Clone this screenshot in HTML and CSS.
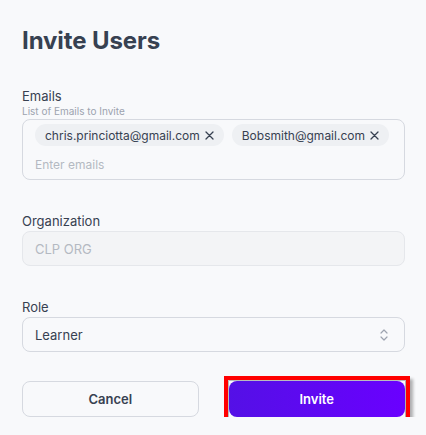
FILE: index.html
```html
<!DOCTYPE html>
<html>
<head>
<meta charset="utf-8">
<link rel="stylesheet" href="styles.css">
</head>
<body>
<div class="page">
  <h1 class="title">Invite Users</h1>

  <div class="field field-emails">
    <div class="label">Emails</div>
    <div class="hint">List of Emails to Invite</div>
    <div class="box tags">
      <div class="chips">
        <span class="chip">chris.princiotta@gmail.com <svg class="x" width="9" height="9" viewBox="0 0 9 9"><path d="M1 1 L8 8 M8 1 L1 8" stroke="#374151" stroke-width="1.3" stroke-linecap="round"/></svg></span>
        <span class="chip">Bobsmith@gmail.com <svg class="x" width="9" height="9" viewBox="0 0 9 9"><path d="M1 1 L8 8 M8 1 L1 8" stroke="#374151" stroke-width="1.3" stroke-linecap="round"/></svg></span>
      </div>
      <div class="placeholder">Enter emails</div>
    </div>
  </div>

  <div class="field field-org">
    <div class="label">Organization</div>
    <div class="box input disabled">CLP ORG</div>
  </div>

  <div class="field field-role">
    <div class="label">Role</div>
    <div class="box input select">
      <span>Learner</span>
      <svg class="updown" width="10" height="14" viewBox="0 0 10 14"><path d="M2 5 L5 2 L8 5" fill="none" stroke="#9ca3af" stroke-width="1.2" stroke-linecap="round" stroke-linejoin="round"/><path d="M2 9 L5 12 L8 9" fill="none" stroke="#9ca3af" stroke-width="1.2" stroke-linecap="round" stroke-linejoin="round"/></svg>
    </div>
  </div>

  <div class="actions">
    <button class="btn cancel">Cancel</button>
    <div class="highlight"><button class="btn invite">Invite</button></div>
  </div>
</div>
</body>
</html>
```
FILE: styles.css
```css
html, body {
  margin: 0;
  padding: 0;
  background: #f8f9fb;
}
body {
  font-family: Inter, "Noto Sans", sans-serif;
  color: #374151;
}
.page {
  padding: 26px 21px 0 22px;
}
.title {
  margin: 0;
  font-size: 24px;
  font-weight: 700;
  line-height: 30px;
  color: #374151;
  letter-spacing: -0.1px;
}
.field-emails { margin-top: 32px; }
.field-org { margin-top: 33px; }
.field-role { margin-top: 33px; }
.label {
  font-size: 13px;
  line-height: 16px;
  color: #374151;
}
.hint {
  font-size: 10px;
  line-height: 12px;
  color: #9ca3af;
  margin-top: 1px;
}
.box {
  border: 1px solid #d6d9e0;
  border-radius: 8px;
  box-sizing: border-box;
}
.tags {
  margin-top: 2px;
  height: 61px;
  padding: 4px 12px 0 12px;
}
.chips {
  display: flex;
  gap: 8px;
}
.chip {
  display: inline-flex;
  align-items: center;
  height: 22px;
  padding: 0 10px 0 10px;
  border-radius: 11px;
  background: #eef0f3;
  font-size: 12px;
  color: #374151;
}
.chip .x {
  margin-left: 5px;
}
.placeholder {
  margin-top: 11px;
  font-size: 12px;
  line-height: 16px;
  color: #b4b9c2;
}
.input {
  margin-top: 2px;
  height: 35px;
  display: flex;
  align-items: center;
  padding: 0 12px;
  font-size: 13px;
}
.disabled {
  background: #f3f4f6;
  border-color: #e5e7eb;
  color: #b4b9c2;
}
.select {
  justify-content: space-between;
  color: #374151;
}
.updown { margin-right: 3px; }
.actions {
  margin-top: 29px;
  display: grid;
  grid-template-columns: 1fr 1fr;
  gap: 30px;
}
.btn {
  font-family: Inter, "Noto Sans", sans-serif;
  font-size: 13px;
  font-weight: 600;
  height: 36px;
  border-radius: 8px;
  width: 100%;
  cursor: pointer;
}
.cancel {
  background: #f8f9fb;
  border: 1px solid #d6d9e0;
  color: #374151;
}
.highlight {
  outline: 4px solid #ff0000;
  outline-offset: 1px;
  box-shadow: 3px 3px 3px 5px rgba(0,0,0,0.3);
}
.invite {
  display: block;
  border: none;
  color: #fff;
  background: linear-gradient(90deg, #5410e6, #6a00ff);
}
```
